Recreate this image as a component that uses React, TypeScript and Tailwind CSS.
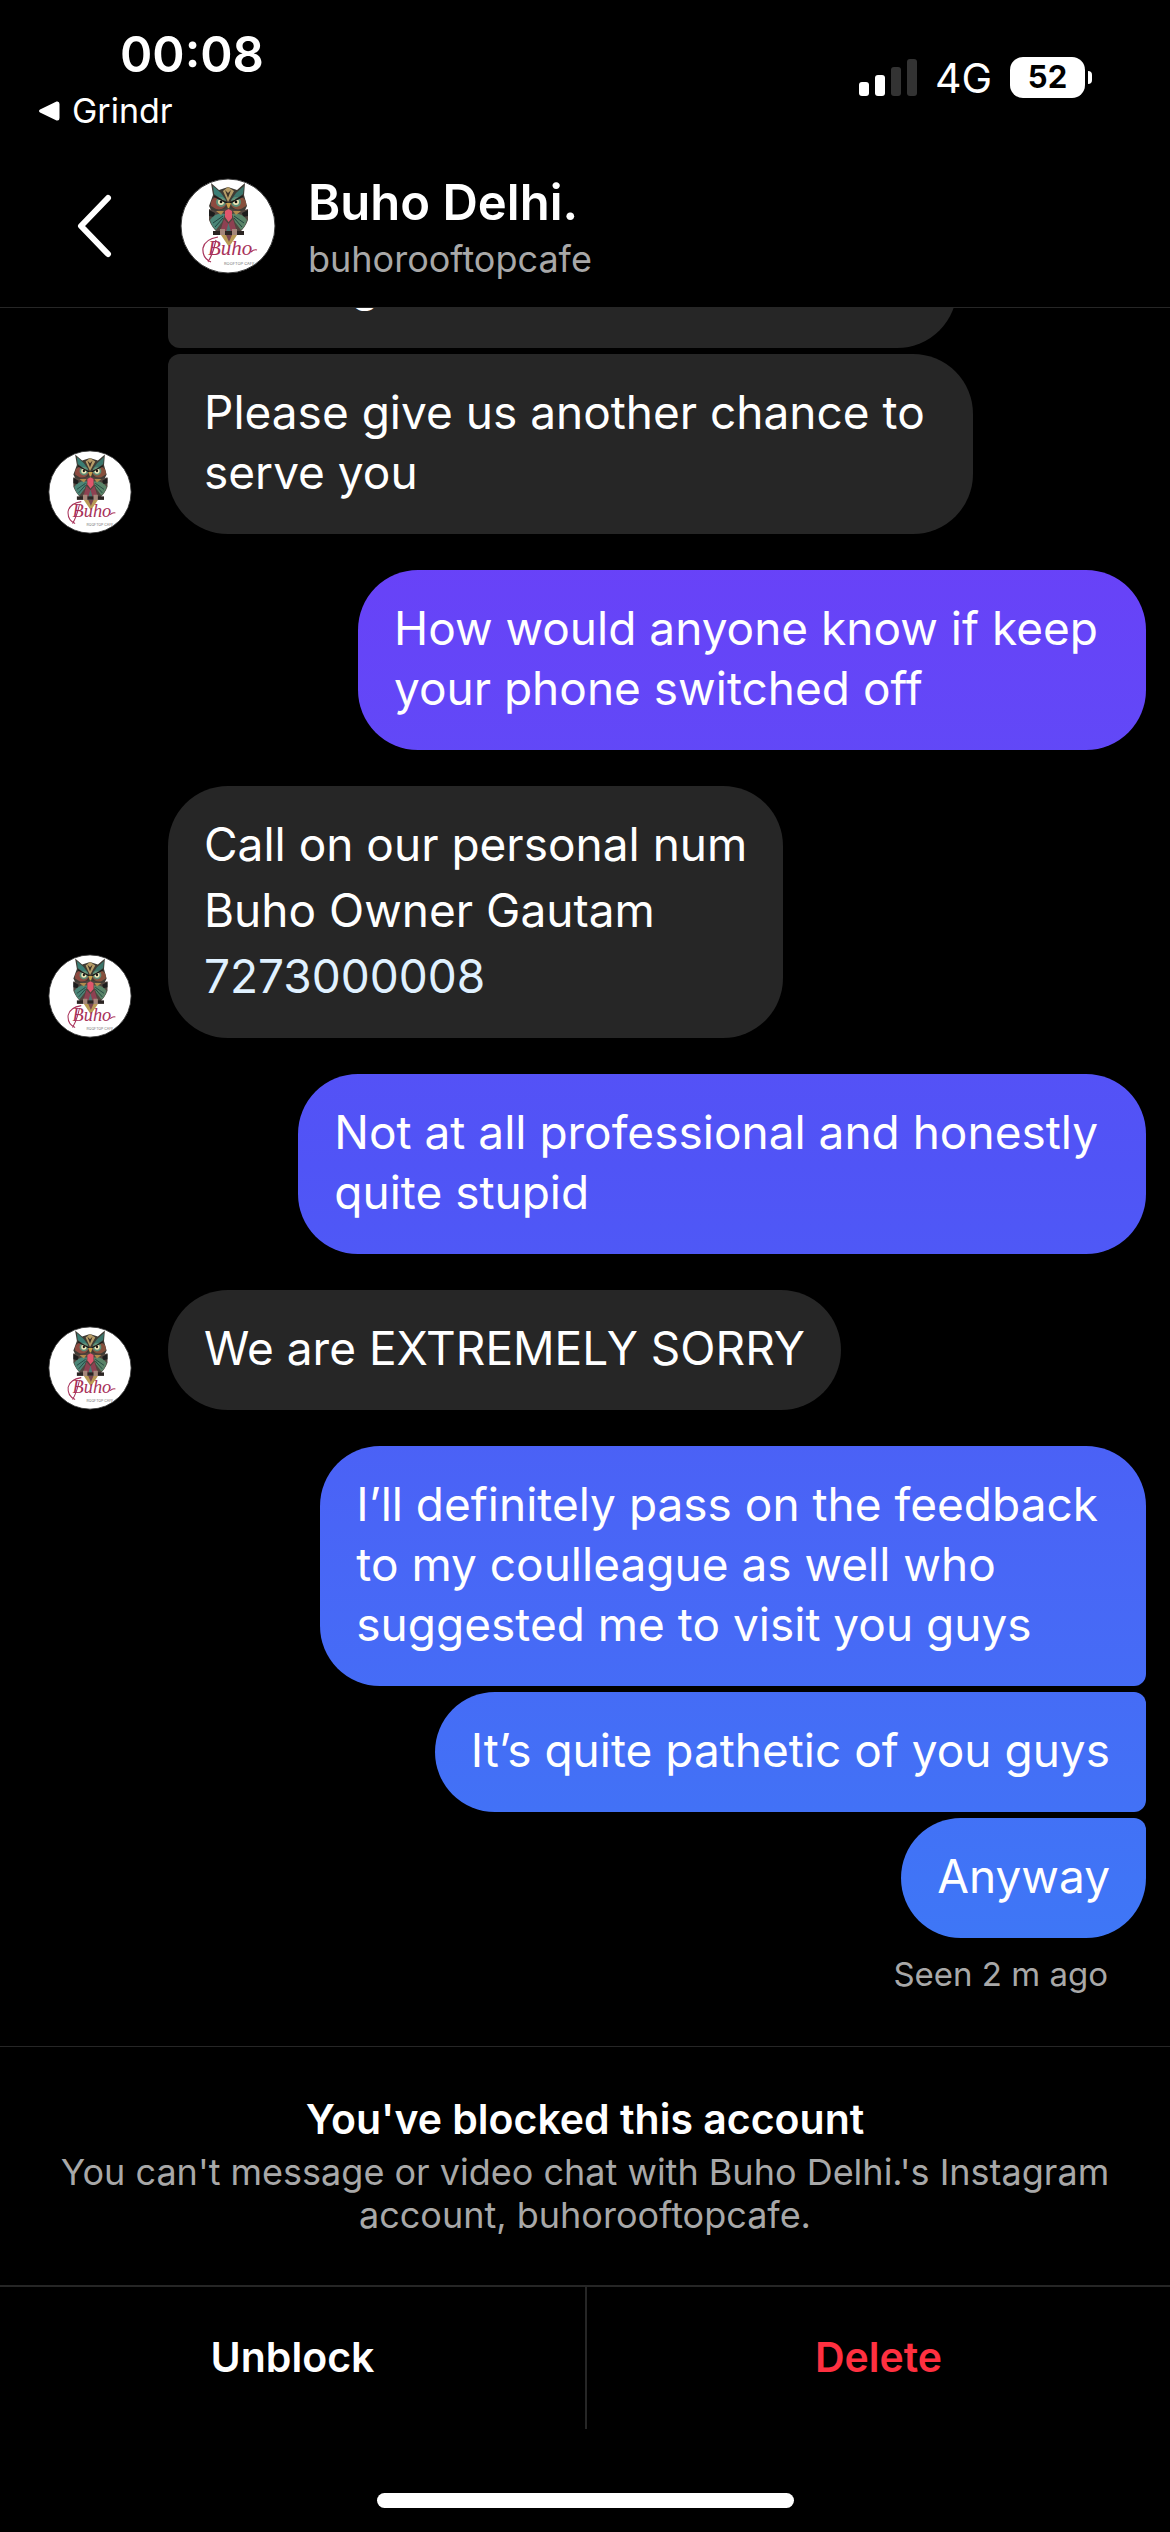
import React from 'react';
import clsx from 'clsx';

interface Message {
  id: number;
  from: 'them' | 'me';
  lines: string[];
  // joined to the previous / next bubble of the same sender
  joinTop?: boolean;
  joinBottom?: boolean;
  avatar?: boolean;
  wrapped?: boolean;
  phone?: string;
}

const messages: Message[] = [
  { id: 1, from: 'them', lines: ['Please give us another chance to', 'serve you'], joinTop: true, avatar: true, wrapped: true },
  { id: 2, from: 'me', lines: ['How would anyone know if keep', 'your phone switched off'], wrapped: true },
  { id: 3, from: 'them', lines: ['Call on our personal num', 'Buho Owner Gautam'], phone: '7273000008', avatar: true },
  { id: 4, from: 'me', lines: ['Not at all professional and honestly', 'quite stupid'], wrapped: true },
  { id: 5, from: 'them', lines: ['We are EXTREMELY SORRY'], avatar: true },
  {
    id: 6,
    from: 'me',
    lines: ['I’ll definitely pass on the feedback', 'to my coulleague as well who', 'suggested me to visit you guys'],
    joinBottom: true,
    wrapped: true,
  },
  { id: 7, from: 'me', lines: ['It’s quite pathetic of you guys'], joinTop: true, joinBottom: true },
  { id: 8, from: 'me', lines: ['Anyway'], joinTop: true },
];

function BuhoAvatar({ className }: { className?: string }) {
  return (
    <svg viewBox="0 0 96 96" className={clsx('shrink-0 rounded-full', className)} role="img" aria-label="Buho Delhi.">
      <circle cx="48" cy="48" r="47" fill="#fff" stroke="#3a3a3a" strokeWidth="1" />
      {/* ear tufts and head */}
      <path d="M31 5 L39 12 L48 9 L57 12 L65 5 L64 17 L67 28 L64 34 L32 34 L29 28 L33 17 Z" fill="#3f3b34" />
      <path d="M33 8 L41 15 L46 22 L38 19 L34 16 Z" fill="#3a7d74" />
      <path d="M64 8 L56 15 L51 22 L59 19 L63 16 Z" fill="#3c756b" />
      <path d="M43 13 L48 9 L54 13 L48 24 Z" fill="#b79d68" />
      <path d="M45 12 L48 15 L51 12 L48 20 Z" fill="#3d3228" />
      <path d="M31 28 Q30 21 36 19 Q44 19 47 25 Q44 33 36 31Z" fill="#8d4a40" />
      <path d="M66 28 Q67 21 61 19 Q53 19 50 25 Q53 33 61 31Z" fill="#86503c" />
      <circle cx="41" cy="24" r="5" fill="#5d8f78" />
      <circle cx="56" cy="24" r="5" fill="#5d8f78" />
      <circle cx="41" cy="24" r="3" fill="#f0e6b8" />
      <circle cx="56" cy="24" r="3" fill="#f0e6b8" />
      <circle cx="41" cy="24" r="1.3" fill="#15120f" />
      <circle cx="56" cy="24" r="1.3" fill="#15120f" />
      <path d="M34 18 L47 25 M63 18 L50 25" stroke="#1d1c1a" strokeWidth="1.6" />
      <path d="M46 25 L51 25 L48.500 32 Z" fill="#c9a04c" />
      {/* body and wings */}
      <path d="M29 31 L36 33 L48 30 L61 33 L68 31 L68 42 Q65 50 59 55 L38 55 Q32 50 29 42 Z" fill="#51453e" />
      <path d="M29 32 L35 35 L34 39 L29 38 Z" fill="#1c1c1c" />
      <path d="M68 32 L62 35 L63 39 L68 38 Z" fill="#1c1c1c" />
      <path d="M30 42 Q36 34 45 36 L42 44 L36 52 Q32 49 30 42Z" fill="#4b8577" />
      <path d="M67 42 Q61 34 52 36 L55 44 L61 52 Q65 49 67 42Z" fill="#5a8468" />
      <path d="M33 45 L43 38 M35 49 L43 40 M64 45 L54 38 M62 49 L54 40" stroke="#22423f" strokeWidth="1" />
      <path d="M36 33 L44 33 L41 37 Z M61 33 L53 33 L56 37 Z" fill="#b28a4c" />
      <path d="M45 33 L48.500 31 L52 33 L52 40 L48.500 44 L45 39 Z" fill="#e0566c" />
      <path d="M44 41 L48.500 46 L53 41 L57 54 L40 54 Z" fill="#8e4152" />
      <path d="M48.500 45 L51 54 L46 54 Z" fill="#4d7772" />
      {/* perch and tail */}
      <rect x="33" y="53" width="31" height="4" fill="#2b2422" />
      <path d="M40 51 h5 v6 h-5z M52 51 h5 v6 h-5z" fill="#a5877a" />
      <path d="M41 57 L57 57 L49 69 Z" fill="#b99a55" />
      <path d="M46 57 L52 57 L49 64 Z" fill="#7a4650" />
      {/* wordmark */}
      <text x="28" y="77" fill="#a8325a" fontFamily="Liberation Serif, serif" fontStyle="italic" fontSize="21">
        Buho
      </text>
      <path d="M31 84 Q22 80 23 70 Q25 61 38 59 M28 84 Q33 76 36 62" fill="none" stroke="#a8325a" strokeWidth="1.200" />
      <path d="M71 74 Q74 71 77 72" fill="none" stroke="#a8325a" strokeWidth="1.200" />
      <text x="44" y="87" fill="#777" fontFamily="Inter, sans-serif" fontSize="4">
        ROOFTOP CAFE
      </text>
    </svg>
  );
}

function StatusBar() {
  return (
    <div className="flex items-start justify-between pt-[25px] pr-[78px] pl-[38px]">
      <div>
        <div className="pl-[82px] text-[49px] leading-[60px] font-semibold">00:08</div>
        <a href="#grindr" className="mt-[6px] flex items-center gap-3 text-[34px] leading-[40px]">
          <svg viewBox="0 0 22 20" className="h-5 w-[22px]" aria-hidden="true">
            <path d="M2 8.500 L18.500 0.600 Q21.500 0 21.500 3 V17 Q21.500 20 18.500 19.400 L2 11.500 Q0 10 2 8.500Z" fill="#fff" />
          </svg>
          Grindr
        </a>
      </div>

      <div className="mt-8 flex h-[41px] items-center">
        <svg viewBox="0 0 58 37" className="h-[37px] w-[58px]" aria-hidden="true">
          <rect x="0" y="23" width="10" height="14" rx="3" fill="#fff" />
          <rect x="16" y="16" width="10" height="21" rx="3" fill="#fff" />
          <rect x="32" y="8" width="10" height="29" rx="3" fill="#333" />
          <rect x="48" y="0" width="10" height="37" rx="3" fill="#333" />
        </svg>
        <span className="ml-[18px] text-[41px] leading-[48px]">4G</span>
        <span className="ml-[18px] flex h-[41px] w-[75px] items-center justify-center rounded-[13px] bg-white text-[31px] font-bold text-black">
          52
        </span>
        <span className="ml-[3px] h-[13px] w-1 rounded-r-full bg-white" />
      </div>
    </div>
  );
}

function Bubble({ message }: { message: Message }) {
  const mine = message.from === 'me';

  return (
    <div
      className={clsx(
        'rounded-[60px] pl-9',
        mine
          ? 'bg-linear-to-b from-[#6a40f8] from-20% via-[#5054f6] via-46% to-[#3d78f6] to-78% bg-fixed'
          : 'bg-[#262626]',
        message.wrapped ? 'pr-12' : 'pr-9',
        message.phone ? 'pt-[25px] pb-[29px] leading-[66px]' : 'pt-7 pb-8 leading-[60px]',
        message.joinTop && (mine ? 'rounded-tr-[12px]' : 'rounded-tl-[12px]'),
        message.joinBottom && (mine ? 'rounded-br-[12px]' : 'rounded-bl-[12px]'),
      )}
    >
      {message.lines.map((line) => (
        <p key={line}>{line}</p>
      ))}
      {message.phone && (
        <a href={`tel:${message.phone}`} className="block text-[#e0f1ff]">
          {message.phone}
        </a>
      )}
    </div>
  );
}

function MessageRow({ message }: { message: Message }) {
  const mine = message.from === 'me';

  return (
    <div
      className={clsx(
        'flex items-end',
        mine ? 'justify-end pr-6' : 'pl-12',
        message.joinTop ? 'mt-[6px]' : 'mt-9',
      )}
    >
      {message.avatar && <BuhoAvatar className="mr-9 size-[84px]" />}
      <Bubble message={message} />
    </div>
  );
}

export default function App() {
  return (
    <div
      className="flex h-screen flex-col bg-black text-white"
      style={{ fontFamily: 'Inter, "Liberation Sans", sans-serif' }}
    >
      <header className="border-b border-[#262626]">
        <StatusBar />
        <div className="flex items-center pt-[42px] pb-7 pl-[76px]">
          <button type="button" aria-label="Back">
            <svg viewBox="0 0 36 64" className="h-16 w-9" aria-hidden="true">
              <path d="M32 4 L5 32 L32 60" fill="none" stroke="#fff" strokeWidth="6" strokeLinecap="round" strokeLinejoin="round" />
            </svg>
          </button>
          <BuhoAvatar className="ml-[68px] size-24" />
          <div className="ml-8">
            <h1 className="text-[49px] leading-[60px] font-semibold">Buho Delhi.</h1>
            <p className="mt-[6px] text-[36px] leading-[40px] text-[#a8a8a8]">buhorooftopcafe</p>
          </div>
        </div>
      </header>

      <main className="flex min-h-0 flex-1 flex-col justify-end overflow-hidden pb-[52px] text-[46px]">
        <div className="ml-[168px] w-[789px] shrink-0 rounded-[60px] rounded-bl-[12px] bg-[#262626] pt-7 pr-9 pb-[34px] pl-9 leading-[60px]">
          booking
        </div>
        {messages.map((message) => (
          <MessageRow key={message.id} message={message} />
        ))}
        <p className="mt-4 pr-[62px] text-right text-[33px] leading-[40px] text-[#a8a8a8]">Seen 2 m ago</p>
      </main>

      <footer className="border-t border-[#262626]">
        <div className="px-12 py-12 text-center">
          <h2 className="text-[41px] leading-[48px] font-semibold">You've blocked this account</h2>
          <p className="mt-2 text-[36px] leading-[43px] text-[#a8a8a8]">
            You can't message or video chat with Buho Delhi.'s Instagram account, buhorooftopcafe.
          </p>
        </div>
        <div className="grid grid-cols-2 border-t-2 border-[#262626] text-[41px] leading-[48px] font-semibold">
          <button type="button" className="pt-[46px] pb-12">
            Unblock
          </button>
          <button type="button" className="border-l-2 border-[#262626] pt-[46px] pb-12 text-[#ff3040]">
            Delete
          </button>
        </div>
        <div className="mx-auto mt-16 mb-6 h-[15px] w-[417px] rounded-full bg-white" />
      </footer>
    </div>
  );
}
